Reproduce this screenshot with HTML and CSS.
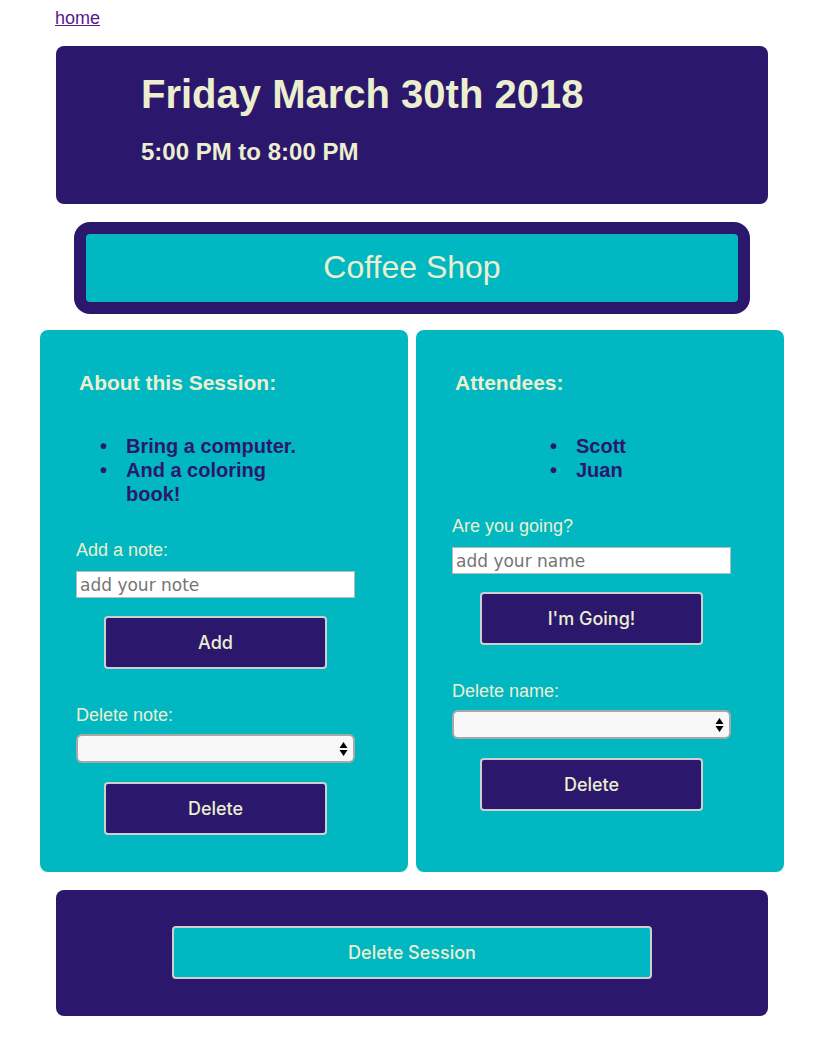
FILE: index.html
```html
<!DOCTYPE html>
<html>
<head>
<meta charset="utf-8">
<title>Session</title>
<link rel="stylesheet" href="styles.css">
</head>
<body>
<div class="page">
  <nav class="nav"><a class="home-link" href="#">home</a></nav>

  <header class="date-card">
    <h1 class="date-title">Friday March 30th 2018</h1>
    <h2 class="date-time">5:00 PM to 8:00 PM</h2>
  </header>

  <div class="venue">
    <div class="venue-inner">Coffee Shop</div>
  </div>

  <div class="columns">
    <section class="panel">
      <h3 class="panel-title">About this Session:</h3>
      <ul class="items items-notes">
        <li>Bring a computer.</li>
        <li>And a coloring book!</li>
      </ul>
      <form class="panel-form">
        <label class="field-label">Add a note:</label>
        <input class="text-input" type="text" placeholder="add your note">
        <button class="btn btn-dark" type="button">Add</button>
        <label class="field-label field-label-gap">Delete note:</label>
        <div class="select-box">
          <svg class="select-arrows" width="9" height="16" viewBox="0 0 9 16"><path d="M4.5 1 L8.5 7 L0.5 7 Z" fill="#000"/><path d="M0.5 9 L8.5 9 L4.5 15 Z" fill="#000"/></svg>
        </div>
        <button class="btn btn-dark btn-last" type="button">Delete</button>
      </form>
    </section>

    <section class="panel">
      <h3 class="panel-title">Attendees:</h3>
      <ul class="items items-people">
        <li>Scott</li>
        <li>Juan</li>
      </ul>
      <form class="panel-form">
        <label class="field-label">Are you going?</label>
        <input class="text-input" type="text" placeholder="add your name">
        <button class="btn btn-dark" type="button">I'm Going!</button>
        <label class="field-label field-label-gap">Delete name:</label>
        <div class="select-box">
          <svg class="select-arrows" width="9" height="16" viewBox="0 0 9 16"><path d="M4.5 1 L8.5 7 L0.5 7 Z" fill="#000"/><path d="M0.5 9 L8.5 9 L4.5 15 Z" fill="#000"/></svg>
        </div>
        <button class="btn btn-dark btn-last" type="button">Delete</button>
      </form>
    </section>
  </div>

  <footer class="danger-card">
    <button class="btn btn-teal" type="button">Delete Session</button>
  </footer>
</div>
</body>
</html>
```

FILE: styles.css
```css
html, body {
  margin: 0;
  padding: 0;
  background: #ffffff;
}

body {
  padding-left: 2px;
  font-family: "Liberation Sans", Arial, sans-serif;
  color: #ecefcf;
}

.page {
  width: 744px;
  margin: 0 auto;
  padding-top: 8px;
}

.nav {
  padding-left: 15px;
  line-height: 21px;
  height: 21px;
}

.home-link {
  font-size: 18px;
  color: #551a8b;
  text-decoration: underline;
}

.date-card {
  margin: 17px 16px 0;
  background: #2b186d;
  border-radius: 8px;
  padding: 25px 20px 38px 85px;
}

.date-title {
  margin: 0;
  font-size: 40px;
  line-height: 46px;
  font-weight: bold;
  color: #ecefcf;
}

.date-time {
  margin: 21px 0 0;
  font-size: 24px;
  line-height: 28px;
  font-weight: bold;
  color: #ecefcf;
}

.venue {
  margin: 18px 34px 0;
  border: 12px solid #2b186d;
  border-radius: 16px;
  background: #2b186d;
}

.venue-inner {
  background: #00b7c2;
  border-radius: 4px;
  text-align: center;
  font-size: 32px;
  line-height: 38px;
  padding: 14px 0 16px;
  color: #ecefcf;
}

.columns {
  margin-top: 16px;
  display: flex;
  gap: 8px;
}

.panel {
  flex: 1;
  background: #00b7c2;
  border-radius: 8px;
  padding: 41px 36px 37px;
}

.panel-title {
  margin: 0;
  padding-left: 3px;
  font-size: 21px;
  line-height: 24px;
  font-weight: bold;
  color: #ecefcf;
}

.items {
  margin: 39px 0 34px;
  list-style: none;
  font-size: 20px;
  line-height: 24px;
  font-weight: bold;
  color: #2b186d;
}

.items li {
  padding-left: 26px;
  text-indent: -26px;
}

.items li::before {
  content: "\2022";
  display: inline-block;
  width: 26px;
  text-indent: 0;
  font-size: 20px;
}

.items-notes {
  padding-left: 24px;
  width: 199px;
}

.items-people {
  padding-left: 98px;
}

.panel-form {
  display: flex;
  flex-direction: column;
  width: 279px;
}

.field-label {
  display: block;
  font-size: 18px;
  line-height: 21px;
  color: #ecefcf;
}

.field-label-gap {
  margin-top: 36px;
}

.text-input {
  margin-top: 10px;
  box-sizing: border-box;
  width: 279px;
  height: 27px;
  border: 1px solid #b9b9b9;
  box-shadow: inset 0 0 0 1px #ffffff;
  background: #ffffff;
  padding: 0 3px;
  font-family: "DejaVu Sans", sans-serif;
  font-size: 17px;
  color: #333;
  outline: none;
}

.text-input::placeholder {
  color: #757575;
}

.select-box {
  margin-top: 8px;
  box-sizing: border-box;
  width: 279px;
  height: 29px;
  border: 2px solid #a8a8a8;
  border-radius: 6px;
  background: #f8f8f8;
  display: flex;
  align-items: center;
  justify-content: flex-end;
  padding-right: 5px;
}

.select-arrows {
  display: block;
}

.btn {
  box-sizing: border-box;
  height: 53px;
  border: 2px solid #cfcfcf;
  border-radius: 4px;
  font-family: Inter, "Liberation Sans", sans-serif;
  font-weight: 500;
  font-size: 18px;
  color: #ecefcf;
  cursor: pointer;
}

.btn-dark {
  align-self: center;
  width: 223px;
  margin-top: 18px;
  background: #2b186d;
}

.btn-last {
  margin-top: 19px;
}

.danger-card {
  margin: 18px 16px 0;
  background: #2b186d;
  border-radius: 8px;
  padding: 36px 0 37px;
  display: flex;
  justify-content: center;
}

.btn-teal {
  width: 480px;
  background: #00b7c2;
}
```
